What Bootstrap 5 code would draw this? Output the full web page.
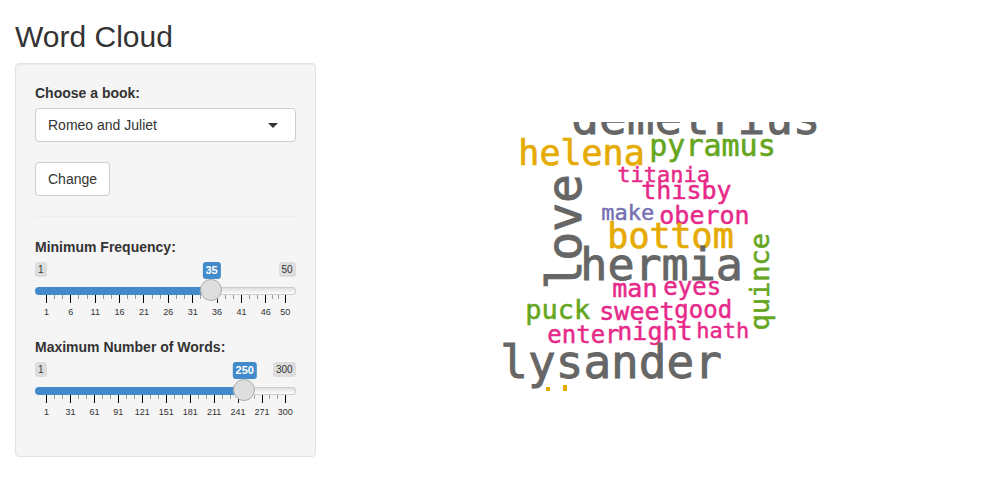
<!DOCTYPE html>
<html lang="en">
<head>
<meta charset="utf-8">
<meta name="viewport" content="width=device-width, initial-scale=1">
<title>Word Cloud</title>
<link href="https://cdn.jsdelivr.net/npm/bootstrap@5.3.0/dist/css/bootstrap.min.css" rel="stylesheet">
<style>
body { font: 14px/20px "Liberation Sans", Arial, sans-serif; color: #333; background: #fff; }
.page { --bs-gutter-x: 30px; padding: 0 15px; }
.page > .row { --bs-gutter-x: 30px; }
h1 { font-size: 30px; line-height: 33px; font-weight: 400; margin: 20px 0 10px; }
.well { background: #f5f5f5; border: 1px solid #e3e3e3; border-radius: 4px; padding: 19px; box-shadow: inset 0 1px 1px rgba(0,0,0,.05); }
.well label { display: block; font-weight: 700; margin-bottom: 5px; }
.form-select, .btn-plain { font-size: 14px; line-height: 20px; padding: 6px 12px; color: #333; background-color: #fff; border: 1px solid #ccc; border-radius: 4px; }
.form-select { height: 34px; margin-bottom: 20px; background-size: 10px 5px; background-position: right 17px center;
  background-image: url("data:image/svg+xml,%3Csvg xmlns='http://www.w3.org/2000/svg' viewBox='0 0 10 5'%3E%3Cpath fill='%23333' d='M0 0h10L5 5z'/%3E%3C/svg%3E"); }
.well hr { margin: 20px 0; border-top: 1px solid #eee; opacity: 1; }
.slider-group { height: 85px; margin-bottom: 15px; }
.ends { height: 18px; }
.end-label { font-size: 10px; line-height: 13px; padding: 1px 3px; border-radius: 3px; background: #ddd; }
.value-label { position: absolute; top: 0; left: calc(11px + (100% - 22px) * var(--at)); transform: translateX(-50%); font-size: 11px; line-height: 15px; font-weight: 700; padding: 1px 3px; border-radius: 3px; color: #fff; background: #428bca; }
.slider { appearance: none; -webkit-appearance: none; display: block; position: relative; z-index: 1; width: 100%; height: 22px; margin: 0; background: none; }
.slider::-webkit-slider-runnable-track { height: 8px; border-radius: 8px;
  background:
    linear-gradient(#428bca, #428bca) 0 0 / calc(11px + (100% - 22px) * var(--at)) 100% no-repeat border-box,
    linear-gradient(#dedede, #fff) padding-box,
    linear-gradient(#ccc, #ccc) border-box;
  border: 1px solid transparent; }
.slider::-webkit-slider-thumb { -webkit-appearance: none; width: 22px; height: 22px; margin-top: -9px; border-radius: 50%; border: 1px solid #ababab; background: #dedede; box-shadow: 1px 1px 3px rgba(255,255,255,.3); }
.scale { padding: 0 11px; margin-top: -7px; font-size: 9px; line-height: 12px; }
.scale-part { flex-basis: 0; }
.scale-ticks { height: 8px; }
.tick { flex: 1 1 0; width: 0; height: 4px; border-left: 1px solid #999; }
.tick:first-child { height: 8px; border-color: #000; }
.scale-number { width: 1px; margin-top: 3px; }
.scale-end { width: 1px; margin-right: -1px; }
.cloud { position: relative; width: 322px; height: 269px; margin: 59px auto 0; overflow: hidden; font-family: "DejaVu Sans Mono", monospace; line-height: 1; color: #e7298a; }
.cloud span { position: absolute; white-space: nowrap; line-height: 1; left: var(--x); top: var(--y); font-size: var(--s); -webkit-text-stroke: .02em; }
.cloud .gray { color: #666; }
.cloud .gold { color: #e6ab02; }
.cloud .green { color: #66a61e; }
.cloud .violet { color: #7570b3; }
.cloud .upright { writing-mode: vertical-rl; transform: rotate(180deg); }
.cloud i { position: absolute; bottom: 0; width: 4px; background: #e6ab02; left: var(--x); height: var(--s); }
</style>
<script src="https://cdn.jsdelivr.net/npm/bootstrap@5.3.0/dist/js/bootstrap.bundle.min.js"></script>
</head>
<body>
<div class="container-fluid page">
  <h1>Word Cloud</h1>
  <div class="row">
    <div class="col-4">
      <form class="well">
        <label for="book">Choose a book:</label>
        <select class="form-select" id="book">
          <option>Romeo and Juliet</option>
        </select>
        <button type="button" class="btn btn-plain">Change</button>
        <hr>
        <div class="slider-group">
          <label for="freq">Minimum Frequency:</label>
          <div class="position-relative" data-step="5">
            <div class="ends d-flex justify-content-between align-items-start"><span class="end-label">1</span><span class="end-label">50</span></div>
            <output class="value-label" for="freq">35</output>
            <input class="slider" type="range" id="freq" min="1" max="50" value="35">
          </div>
        </div>
        <div class="slider-group">
          <label for="words">Maximum Number of Words:</label>
          <div class="position-relative" data-step="30">
            <div class="ends d-flex justify-content-between align-items-start"><span class="end-label">1</span><span class="end-label">300</span></div>
            <output class="value-label" for="words">250</output>
            <input class="slider" type="range" id="words" min="1" max="300" value="250">
          </div>
        </div>
      </form>
    </div>
    <div class="col-8">
      <div class="cloud" id="cloud"><i></i><i></i></div>
    </div>
  </div>
</div>
<script>
// Sliders: scale below the track, value label above the handle
document.querySelectorAll('[data-step]').forEach(box => {
  const input = box.querySelector('input');
  const min = +input.min, max = +input.max, step = +box.dataset.step;
  const scale = document.createElement('div');
  scale.className = 'scale d-flex';
  for (let v = min; v < max; v += step) {
    const part = document.createElement('div');
    part.className = 'scale-part';
    part.style.flexGrow = Math.min(step, max - v);
    part.innerHTML = '<div class="scale-ticks d-flex"><div class="tick"></div><div class="tick"></div><div class="tick"></div></div>' +
      '<div class="scale-number d-flex justify-content-center"><span>' + v + '</span></div>';
    scale.append(part);
  }
  const end = document.createElement('div');
  end.className = 'scale-end';
  end.innerHTML = '<div class="tick"></div><div class="scale-number d-flex justify-content-center"><span>' + max + '</span></div>';
  scale.append(end);
  box.append(scale);
  const update = () => {
    box.style.setProperty('--at', (input.value - min) / (max - min));
    box.querySelector('output').textContent = input.value;
  };
  input.addEventListener('input', update);
  update();
});

// Words: text, left, top, font size, colour class
const words = [
  ['demetrius', 71, -27, 46, 'gray'], ['helena', 18, 14, 35, 'gold'], ['pyramus', 149, 9, 30, 'green'],
  ['titania', 117, 42, 22, ''], ['thisby', 141, 56, 25, ''], ['make', 101, 80, 22, 'violet'],
  ['oberon', 159, 81, 25, ''], ['bottom', 107, 97, 35, 'gold'], ['love', 40, 52, 48, 'gray upright'],
  ['hermia', 80, 120, 45, 'gray'], ['quince', 246, 111, 27, 'green upright'], ['man', 112, 154, 25, ''],
  ['eyes', 163, 153, 24, ''], ['puck', 25, 174, 27, 'green'], ['sweet', 99, 177, 25, ''],
  ['good', 174, 176, 24, ''], ['enter', 47, 201, 24, ''], ['night', 117, 197, 25, ''],
  ['hath', 196, 198, 22, ''], ['lysander', 0, 217, 46, 'gray']
];
const cloud = document.getElementById('cloud');
words.forEach(([text, x, y, size, look]) => {
  const el = document.createElement('span');
  el.textContent = text;
  el.className = look;
  el.style.cssText = `--x:${x}px;--y:${y}px;--s:${size}px`;
  cloud.append(el);
});
cloud.querySelectorAll('i').forEach((el, n) => {
  el.style.cssText = n ? '--x:63px;--s:6px' : '--x:46px;--s:4px';
});
</script>
</body>
</html>
